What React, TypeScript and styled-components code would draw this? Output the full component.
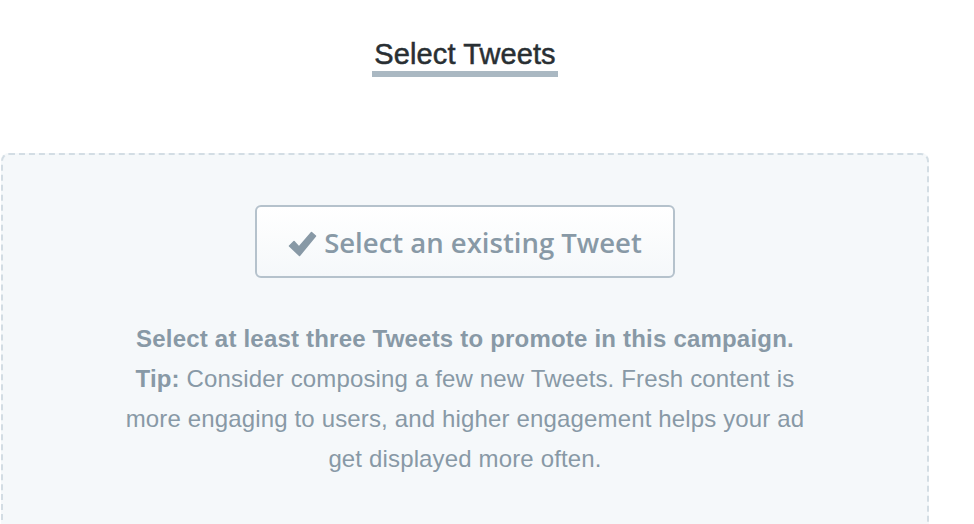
import React from "react";
import styled, { createGlobalStyle } from "styled-components";

const Global = createGlobalStyle`
  html, body { margin: 0; padding: 0; background: #ffffff; }
  body { font-family: "Liberation Sans", Arial, sans-serif; }
`;

const Page = styled.div`
  width: 974px;
  height: 524px;
  overflow: hidden;
  padding: 38px 0 0 1px;
  box-sizing: border-box;
`;

const Column = styled.div`
  width: 928px;
  display: flex;
  flex-direction: column;
  align-items: center;
`;

const Title = styled.h2`
  margin: 0;
  padding: 0 2px;
  font-family: "Liberation Sans", Arial, sans-serif;
  font-weight: normal;
  font-size: 29px;
  line-height: 33px;
  letter-spacing: 0.1px;
  color: #292f33;
  -webkit-text-stroke: 0.5px #292f33;
  border-bottom: 6px solid #aab8c2;
`;

const DropZone = styled.div`
  align-self: stretch;
  margin-top: 76px;
  height: 420px;
  box-sizing: border-box;
  border: 2px dashed #d3dde4;
  border-radius: 8px;
  background: #f5f8fa;
  display: flex;
  flex-direction: column;
  align-items: center;
  padding-top: 50px;
`;

const SelectButton = styled.button`
  width: 420px;
  height: 73px;
  box-sizing: border-box;
  border: 2px solid #b5c2cc;
  border-radius: 6px;
  background: linear-gradient(#ffffff, #f5f8fa);
  display: flex;
  align-items: center;
  justify-content: center;
  gap: 7px;
  padding: 2px 0 0 0;
  color: #8899a6;
  font-family: "Open Sans", sans-serif;
  font-weight: 600;
  font-size: 27.5px;
  cursor: pointer;
`;

const Check = styled.svg`
  width: 29px;
  height: 26px;
  flex: none;
  margin-top: 2px;
`;

const Help = styled.div`
  margin-top: 41px;
  max-width: 690px;
  text-align: center;
  color: #8899a6;
  font-family: "Liberation Sans", Arial, sans-serif;
  font-size: 24px;
  letter-spacing: 0.15px;
  line-height: 40px;
`;

const Lead = styled.p`
  margin: 0;
  font-weight: bold;
  letter-spacing: 0.2px;
`;

const Tip = styled.p`
  margin: 0;
`;

const Strong = styled.strong`
  font-weight: bold;
`;

export default function App() {
  return (
    <>
      <Global />
      <Page>
        <Column>
          <Title>Select Tweets</Title>
          <DropZone>
            <SelectButton type="button">
              <Check viewBox="0 0 29 26">
                <path
                  d="M1.5 15 L6 10.5 L11 16 L23.5 1.5 L27.5 5 L11.5 24.5 Z"
                  fill="#8899a6"
                  stroke="#8899a6"
                  strokeWidth="1.5"
                  strokeLinejoin="round"
                />
              </Check>
              Select an existing Tweet
            </SelectButton>
            <Help>
              <Lead>Select at least three Tweets to promote in this campaign.</Lead>
              <Tip>
                <Strong>Tip:</Strong> Consider composing a few new Tweets. Fresh content is
                more engaging to users, and higher engagement helps your ad get displayed
                more often.
              </Tip>
            </Help>
          </DropZone>
        </Column>
      </Page>
    </>
  );
}
